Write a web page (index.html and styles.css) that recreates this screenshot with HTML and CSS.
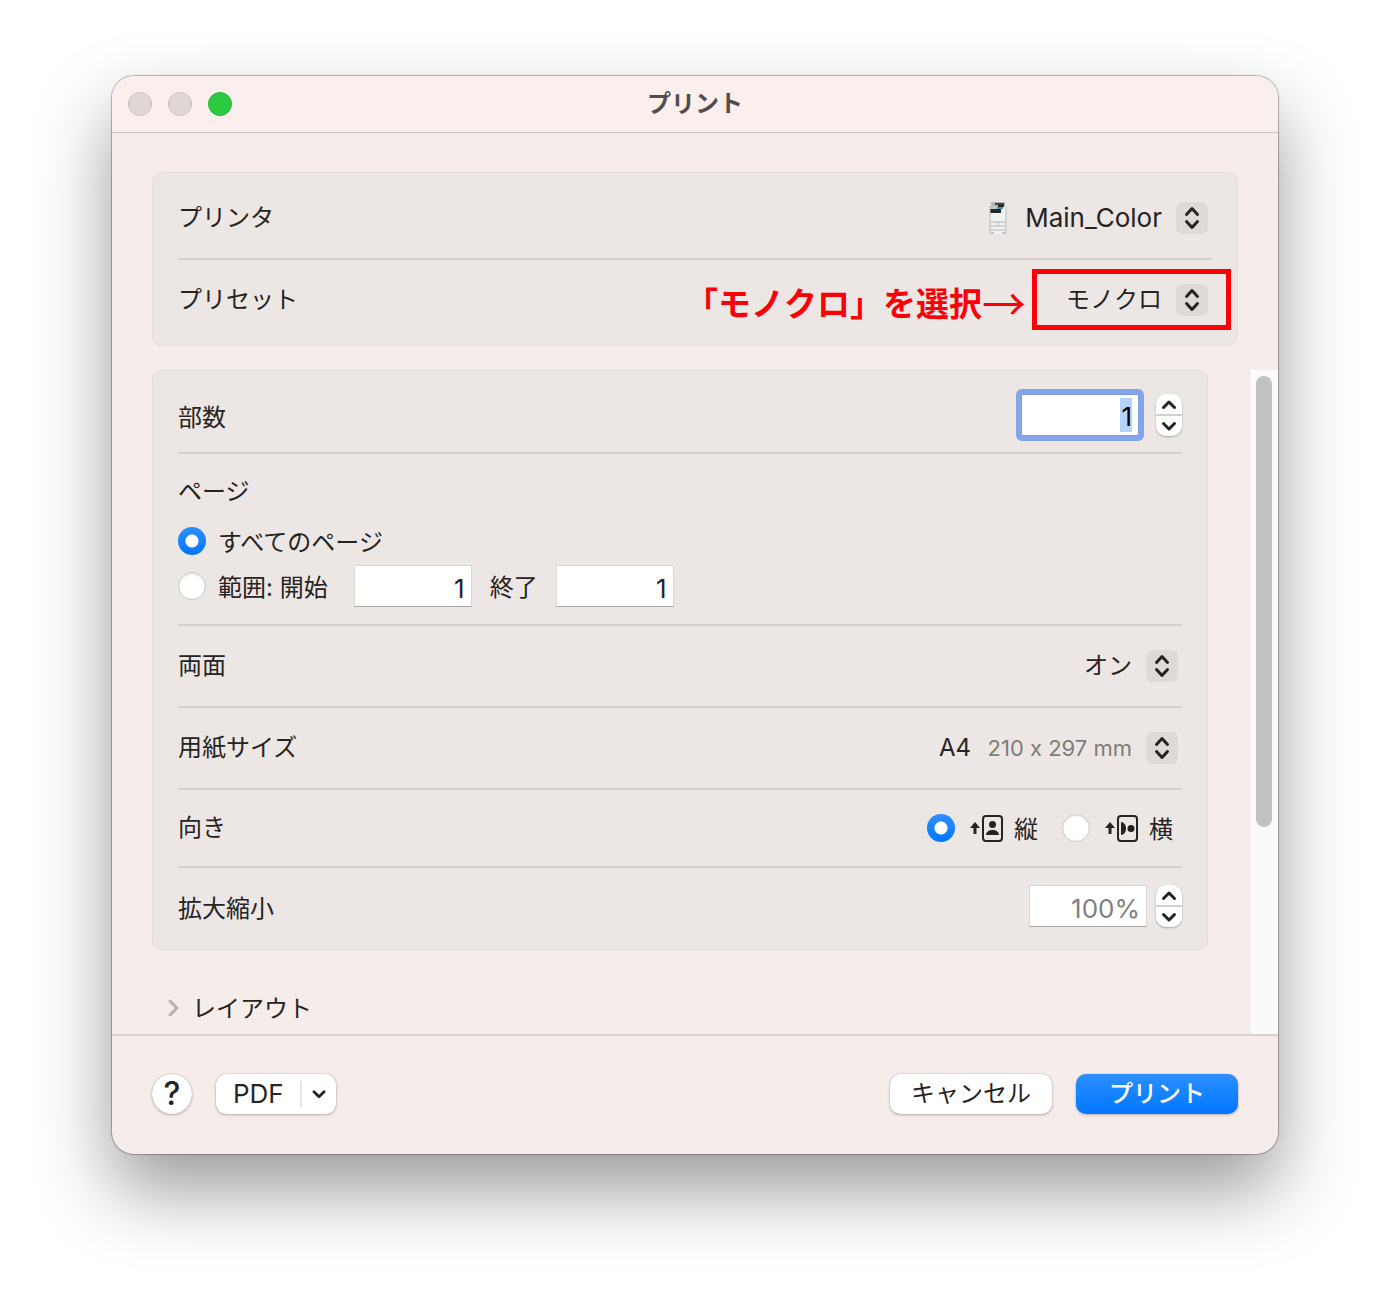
FILE: index.html
```html
<!DOCTYPE html>
<html lang="ja">
<head>
<meta charset="utf-8">
<title>プリント</title>
<link rel="stylesheet" href="styles.css">
</head>
<body>
<svg class="defs" aria-hidden="true">
  <symbol id="updown" viewBox="0 0 32 32"><path d="M10.500 12.500 16 6.500l5.500 6M10.500 19.500l5.500 6 5.500-6"/></symbol>
  <symbol id="up" viewBox="0 0 26 20"><path d="M7.500 13.500 13 8l5.500 5.500"/></symbol>
  <symbol id="down" viewBox="0 0 26 20"><path d="M7.500 7.500 13 13l5.500-5.500"/></symbol>
</svg>
<main class="window">
  <header class="titlebar">
    <div class="lights">
      <button class="light" type="button" aria-label="閉じる"></button>
      <button class="light" type="button" aria-label="しまう"></button>
      <button class="light zoom" type="button" aria-label="拡大"></button>
    </div>
    <h1>プリント</h1>
  </header>

  <form class="dialog">
    <section class="panel destination">
      <div class="row">
        <label for="printer">プリンタ</label>
        <div class="popup with-icon">
          <svg class="printer" viewBox="0 0 18 34" aria-hidden="true">
            <rect x="2" y="1" width="14" height="4" rx="1" fill="#b4b9b8"/>
            <path d="M6 2h9v2H6z" fill="#3c4042"/>
            <rect x="1" y="5" width="16" height="28" fill="#f1f3f1"/>
            <path d="M1 5h9l3 3H1z" fill="#c3c8c8"/>
            <path d="M9 4h6v2H9z" fill="#22282c"/>
            <path d="M1 8h11v4H1z" fill="#22282c"/>
            <path d="M8 6h6v2H8z" fill="#4d87aa"/>
            <path d="M1 21h16M1 25h16M1 29h16M9 21v4" stroke="#b3b7b5" fill="none"/>
            <path d="M2 32h3M13 32h3" stroke="#8e9292"/>
            <path d="M1 5v28M17 5v28" stroke="#babdba"/>
          </svg>
          <select id="printer"><option>Main_Color</option></select>
          <svg class="updown"><use href="#updown"/></svg>
        </div>
      </div>
      <div class="row">
        <label for="preset">プリセット</label>
        <div class="popup">
          <select id="preset"><option>モノクロ</option></select>
          <svg class="updown"><use href="#updown"/></svg>
        </div>
        <div class="highlight"></div>
        <p class="note">「モノクロ」を選択<span>→</span></p>
      </div>
    </section>

    <div class="scroller">
      <div class="options">
        <section class="panel settings">
          <div class="row copies">
            <label for="copies">部数</label>
            <div class="number">
              <div class="field focused"><input id="copies" type="text" value="1"></div>
              <div class="stepper">
                <button type="button" aria-label="部数を増やす"><svg><use href="#up"/></svg></button>
                <button type="button" aria-label="部数を減らす"><svg><use href="#down"/></svg></button>
              </div>
            </div>
          </div>
          <fieldset class="row pages">
            <legend>ページ</legend>
            <label class="choice"><input type="radio" name="pages" checked><span>すべてのページ</span></label>
            <div class="range">
              <label class="choice"><input type="radio" name="pages"><span>範囲: 開始</span></label>
              <input class="text first" type="text" value="1" aria-label="開始ページ">
              <label class="to" for="last">終了</label>
              <input class="text" id="last" type="text" value="1">
            </div>
          </fieldset>
          <div class="row">
            <label for="duplex">両面</label>
            <div class="popup">
              <select id="duplex"><option>オン</option></select>
              <svg class="updown"><use href="#updown"/></svg>
            </div>
          </div>
          <div class="row">
            <label for="paper">用紙サイズ</label>
            <div class="popup">
              <select id="paper"><option>A4</option></select>
              <span class="detail">210 x 297 mm</span>
              <svg class="updown"><use href="#updown"/></svg>
            </div>
          </div>
          <div class="row orientation" role="radiogroup" aria-labelledby="orientation">
            <span id="orientation">向き</span>
            <div class="choices">
              <label class="choice"><input type="radio" name="orientation" checked>
                <svg class="page" viewBox="0 0 34 30" aria-hidden="true">
                  <path class="ink" d="M5 9l5 6H6.500v6h-3v-6H0z"/>
                  <rect class="frame" x="13" y="3" width="19" height="25" rx="3"/>
                  <circle class="ink" cx="22.500" cy="11.500" r="3.500"/>
                  <path class="ink" d="M16 22c0-3 3-5 6.500-5s6.500 2 6.500 5z"/>
                </svg><span>縦</span></label>
              <label class="choice"><input type="radio" name="orientation">
                <svg class="page" viewBox="0 0 34 30" aria-hidden="true">
                  <path class="ink" d="M5 9l5 6H6.500v6h-3v-6H0z"/>
                  <rect class="frame" x="13" y="3" width="19" height="25" rx="3"/>
                  <circle class="ink" cx="26" cy="15.500" r="3.500"/>
                  <path class="ink" d="M16 9c3 0 5 3 5 6.500S19 22 16 22z"/>
                </svg><span>横</span></label>
            </div>
          </div>
          <div class="row scale">
            <label for="scale">拡大縮小</label>
            <div class="number">
              <input class="text muted" id="scale" type="text" value="100%">
              <div class="stepper">
                <button type="button" aria-label="拡大"><svg><use href="#up"/></svg></button>
                <button type="button" aria-label="縮小"><svg><use href="#down"/></svg></button>
              </div>
            </div>
          </div>
        </section>
        <button class="disclosure" type="button" aria-expanded="false">
          <svg viewBox="0 0 12 20" aria-hidden="true"><path d="M2 2l7 7-7 7"/></svg>レイアウト
        </button>
      </div>
      <div class="track"><div class="thumb"></div></div>
    </div>

    <footer class="actions">
      <button class="help" type="button" aria-label="ヘルプ">?</button>
      <button class="button pdf" type="button"><span>PDF</span><svg viewBox="0 0 26 20" aria-hidden="true"><use href="#down"/></svg></button>
      <button class="button cancel" type="button">キャンセル</button>
      <button class="button primary" type="submit">プリント</button>
    </footer>
  </form>
</main>
</body>
</html>
```
FILE: styles.css
```css
* { box-sizing: border-box; }

body {
  margin: 0;
  padding: 76px 112px 148px;
  background: #fff;
  color: #262322;
  font: 24px/32px Inter, "Noto Sans CJK JP", sans-serif;
  font-variant-ligatures: no-contextual;
}

button, input, select { font: inherit; color: inherit; margin: 0; }
button { padding: 0; border: 0; background: none; }
.defs { display: none; }
symbol path { fill: none; stroke: #262322; stroke-width: 3; stroke-linecap: round; stroke-linejoin: round; }

.window {
  overflow: hidden;
  border-radius: 22px;
  background: #f6edeb;
  box-shadow: 0 0 1px 1px rgba(0, 0, 0, .28), 0 36px 76px rgba(0, 0, 0, .4);
}

/* Title bar */
.titlebar {
  display: grid;
  grid-template-columns: 1fr auto 1fr;
  align-items: center;
  height: 57px;
  padding: 0 16px;
  border-bottom: 1px solid #cdc3c2;
  background: #fbefed;
}
.titlebar h1 { margin: 0; color: #544c4b; font-size: 24px; line-height: 32px; font-weight: 700; }
.lights { display: flex; gap: 16px; }
.light { width: 24px; height: 24px; border: 1px solid #c9bebe; border-radius: 50%; background: #e1d7d7; }
.light.zoom { border-color: #26b53a; background: #2aca41; }

/* Panels */
.panel { border: 1px solid #e3dddb; border-radius: 10px; background: #ece7e4; }
.destination { margin: 39px 40px 24px; padding: 5px 25px; }
.settings { padding: 0 25px 3px; }
.row {
  position: relative;
  display: flex;
  align-items: center;
  justify-content: space-between;
  height: 82px;
  border-bottom: 2px solid #d5d0cd;
}
.row:last-child { height: 80px; border-bottom: 0; }

/* Pop-up menus */
.popup { display: grid; align-items: center; justify-items: end; margin-right: 4px; }
.popup > * { grid-area: 1 / 1; }
.popup select {
  appearance: none;
  padding: 0 46px 0 0;
  border: 0;
  background: none;
  text-align-last: right;
  line-height: 32px;
}
.popup .updown { width: 32px; height: 32px; border-radius: 7px; background: #dfd9d7; pointer-events: none; }
.popup.with-icon select { padding-left: 36px; font-size: 26px; }
.printer { width: 18px; height: 34px; justify-self: start; }
.detail { margin-right: 46px; color: #817c7a; font-size: 22px; pointer-events: none; }
#paper { padding-right: 207px; }

/* Callout drawn over the preset row */
.highlight { position: absolute; top: 9px; right: -19px; width: 199px; height: 61px; border: 5px solid #fb0007; pointer-events: none; }
.note {
  position: absolute;
  top: 18px;
  right: 186px;
  display: flex;
  align-items: center;
  margin: 0;
  color: #fb0007;
  font: 700 33px/48px "Noto Sans CJK JP", sans-serif;
  white-space: nowrap;
}
.note span { font-size: 44px; font-weight: 400; }

/* Scrolling area */
.scroller { display: grid; grid-template-columns: 1fr 29px; border-bottom: 2px solid #d9d2cf; }
.options { padding: 0 41px 9px 40px; }
.track { padding: 6px 5px 0 6px; border-left: 1px solid #e9e5e4; background: #fafafa; }
.thumb { width: 16px; height: 68%; min-height: 451px; border-radius: 8px; background: #c1c1c1; }

/* Numbers */
.number { display: flex; align-items: center; gap: 9px; }
.text, .field input {
  width: 118px;
  height: 42px;
  padding: 4px 6px 0;
  border: 1px solid #dcd7d5;
  border-bottom-color: #aaa6a4;
  border-radius: 0;
  background: #fff;
  font-size: 26px;
  text-align: right;
  outline: 0;
}
.text.muted { color: #7f7f7f; }
.field input { border-color: #7b9be0; color: #000; background: linear-gradient(#b3d3fe, #b3d3fe) no-repeat right 6px center / 12px 34px #fff; }
.field { height: 52px; margin-right: 3px; padding: 5px; border-radius: 6px; background: #84a5e9; }
.stepper {
  display: grid;
  grid-template-rows: 20px 20px;
  gap: 2px;
  width: 26px;
  overflow: hidden;
  border-radius: 10px;
  background: #d3d0ce;
  box-shadow: 0 1px 2px rgba(0, 0, 0, .3);
}
.stepper button { display: flex; background: #fff; }
.stepper svg { width: 26px; height: 20px; }
.copies { height: 83px; padding-top: 6px; }
.copies > label, .scale > label { padding-top: 6px; }
.settings .scale { height: 78px; padding-bottom: 2px; }
.settings .orientation { height: 78px; }

/* Page range */
.pages {
  display: flex;
  flex-direction: column;
  align-items: flex-start;
  justify-content: flex-start;
  height: 172px;
  margin: 0;
  padding: 22px 0 0;
  border-width: 0 0 2px;
}
.pages legend { float: left; padding: 0; margin-bottom: 15px; }
.choice { display: flex; align-items: center; }
.choice span, .to { padding-top: 4px; }
.choice input {
  appearance: none;
  flex: none;
  width: 28px;
  height: 28px;
  margin-right: 12px;
  border: 1px solid #cfcac8;
  border-radius: 50%;
  background: #fff;
  box-shadow: inset 0 1px 2px rgba(0, 0, 0, .12);
}
.choice input:checked { border: 0; background: radial-gradient(circle, #fff 6px, transparent 7px), linear-gradient(#2f8fff, #0077ff); box-shadow: none; }
.range { display: flex; align-items: center; gap: 18px; margin-top: 6px; }
.range .first { margin-left: 8px; }

/* Orientation */
.choices { display: flex; gap: 24px; margin-right: 9px; }
.choices input { margin-right: 15px; }
.choices .page { width: 34px; height: 30px; margin-right: 10px; }
.ink { fill: #262322; }
.frame { fill: none; stroke: #262322; stroke-width: 2; }

.disclosure { display: flex; align-items: center; gap: 12px; margin: 43px 0 0 16px; }
.disclosure svg { width: 12px; height: 20px; fill: none; stroke: #b9b3b1; stroke-width: 3; stroke-linecap: round; stroke-linejoin: round; }

/* Bottom bar */
.actions { display: flex; gap: 24px; padding: 38px 40px 40px; }
.button, .help {
  height: 40px;
  border-radius: 10px;
  background: #fff;
  box-shadow: 0 0 1px rgba(0, 0, 0, .35), 0 1px 3px rgba(0, 0, 0, .25);
}
.button { width: 162px; line-height: 38px; }
.help { width: 40px; border-radius: 50%; font-size: 32px; font-weight: 500; }
.pdf { display: flex; align-items: center; width: 120px; padding-left: 17px; font-size: 26px; }
.pdf svg { width: 36px; height: 26px; margin-left: auto; padding: 3px 5px; border-left: 2px solid #e5e5e5; }
.cancel { margin-left: auto; }
.primary { background: linear-gradient(#2c8fff, #0077ff); color: #fff; font-weight: 500; }
```
